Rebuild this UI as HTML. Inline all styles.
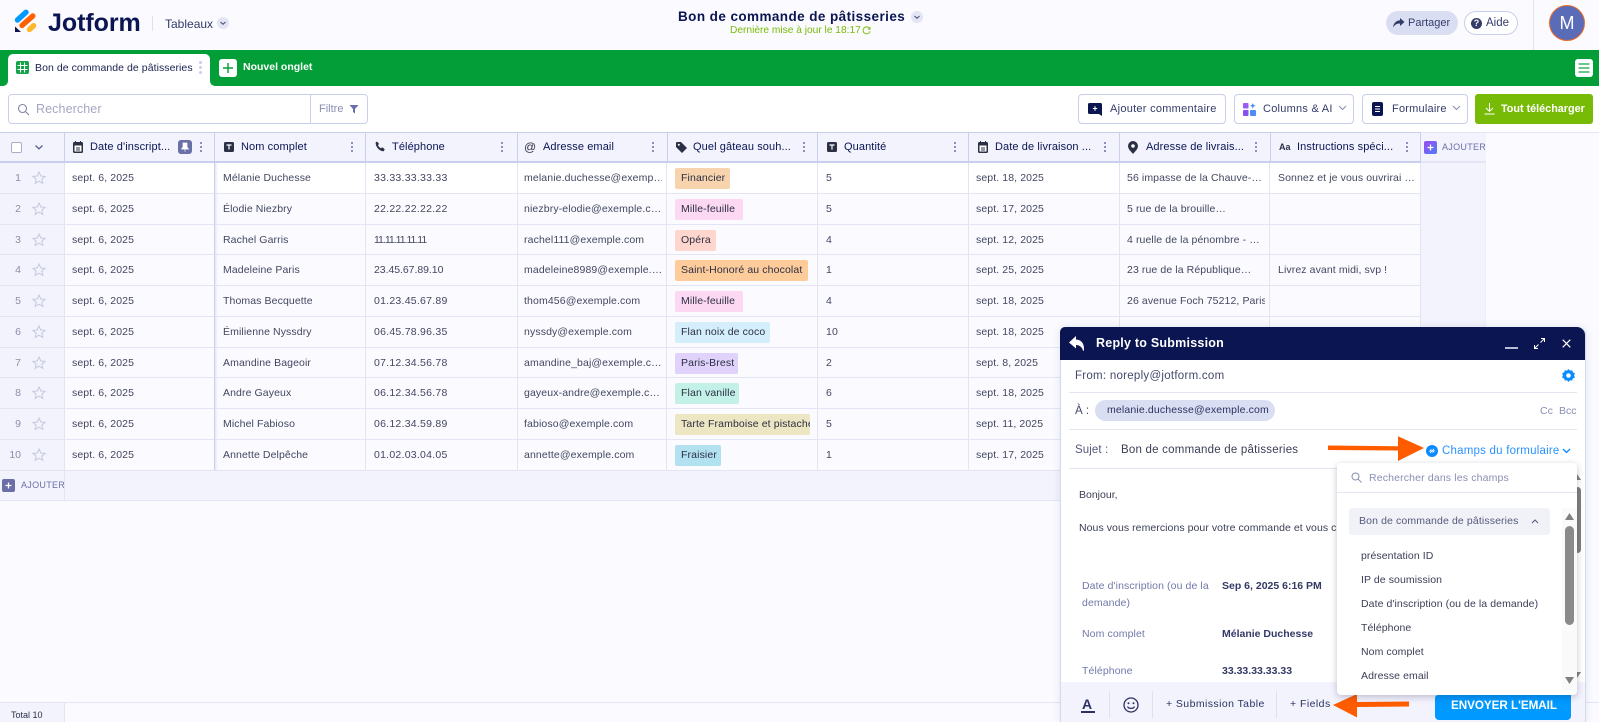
<!DOCTYPE html>
<html lang="fr"><head><meta charset="utf-8"><title>Jotform Tableaux</title>
<style>
*{box-sizing:border-box}
html,body{margin:0;padding:0;width:1599px;height:722px;overflow:hidden;background:#fafaff;font-family:"Liberation Sans",sans-serif;color:#3a3e55}
.a{position:absolute}
.t{position:absolute;white-space:nowrap}
svg{position:absolute;display:block}
.btn{position:absolute;top:94px;height:30px;background:#fff;border:1px solid #c8ceed;border-radius:4px}
.hd{position:absolute;top:132px;height:31px;background:#f3f3fe;border-top:1px solid #c8ceed;border-bottom:2px solid #c8ceed;border-right:1px solid #c8ceed}
.hl{position:absolute;top:138px;font-size:11px;line-height:18px;color:#0a1551;white-space:nowrap;letter-spacing:.1px}
.keb{position:absolute;top:142px;width:2px;height:2px;background:#6a6fa8;box-shadow:0 4px 0 #6a6fa8,0 8px 0 #6a6fa8;border-radius:1px}
.r{position:absolute;left:0;width:1421px;background:#fafaff;border-bottom:1px solid #e3e5f5}
.r.h31{height:31px}.r.h30{height:30px}
.n{position:absolute;left:0;top:0;bottom:0;width:65px;background:#f3f3fe;border-right:1px solid #e3e5f5;font-size:10.5px;color:#8a8fa8;line-height:31px}
.n b{font-weight:400;position:absolute;right:43px}
.c{position:absolute;top:0;font-size:10.5px;line-height:31px;color:#434760;white-space:nowrap;overflow:hidden;letter-spacing:.1px}
.tag{position:absolute;left:675px;top:5px;height:21px;border-radius:2px;font-size:10.5px;line-height:20px;padding-left:6px;color:#2b2f44;white-space:nowrap;overflow:hidden;letter-spacing:.12px}
.st{position:absolute;left:32px;top:8px}
.c1{left:72px;width:138px}.c2{left:223px;width:138px}.c3{left:374px;width:138px;letter-spacing:.25px}.c4{left:524px;width:138px;letter-spacing:.12px}.c6{left:826px;width:138px}.c7{left:976px;width:138px}.c8{left:1127px;width:138px}.c9{left:1278px;width:138px}
.it{position:absolute;left:1361px;font-size:10.5px;line-height:14px;color:#3a3e55;white-space:nowrap;letter-spacing:.08px}
.lab{position:absolute;left:1082px;font-size:10.5px;line-height:14px;color:#7278a8;white-space:nowrap;letter-spacing:.1px}
.val{position:absolute;left:1222px;font-size:10.5px;line-height:14px;color:#343a66;font-weight:700;white-space:nowrap}
</style></head><body>

<!-- Top bar -->
<svg style="left:12px;top:8px" width="28" height="26" viewBox="12 8 28 26">
<path d="M17.5 20 26 12.3" stroke="#0099ff" stroke-width="5.4" stroke-linecap="round"/>
<path d="M22 25.5 32.8 16" stroke="#ff6100" stroke-width="5.4" stroke-linecap="round"/>
<path d="M29.5 29.5 33.6 25.7" stroke="#ffb629" stroke-width="5.4" stroke-linecap="round"/>
<path d="M15 26.5V32h6z" fill="#0a1551"/></svg>
<div class="t" style="left:48px;top:8px;font-size:25px;line-height:30px;font-weight:700;color:#0a1551;letter-spacing:-.05px">Jotform</div>
<div class="a" style="left:152px;top:16px;width:1px;height:15px;background:#dfe1ef"></div>
<div class="t" style="left:165px;top:15px;font-size:12px;line-height:18px;color:#343c6a">Tableaux</div>
<div class="a" style="left:217px;top:17px;width:12px;height:12px;border-radius:50%;background:#e3e5f5"></div>
<svg style="left:217px;top:17px" width="12" height="12" viewBox="0 0 12 12"><path d="M3.5 5l2.5 2.3L8.500 5" fill="none" stroke="#4b5278" stroke-width="1.1"/></svg>

<div class="t" style="left:678px;top:8px;font-size:13.500px;line-height:18px;font-weight:700;color:#0a1551;letter-spacing:.42px">Bon de commande de pâtisseries</div>
<div class="a" style="left:911px;top:11px;width:12px;height:12px;border-radius:50%;background:#e3e5f5"></div>
<svg style="left:911px;top:11px" width="12" height="12" viewBox="0 0 12 12"><path d="M3.5 5l2.5 2.300L8.500 5" fill="none" stroke="#4b5278" stroke-width="1.1"/></svg>
<div class="t" style="left:730px;top:24px;font-size:10.2px;line-height:14px;color:#78bb07">Dernière mise à jour le 18:17</div>
<svg style="left:862px;top:26px" width="9" height="9" viewBox="0 0 9 9"><path d="M7.800 3A3.500 3.500 0 1 0 8 5.200M8 1v2.200H5.900" fill="none" stroke="#78bb07" stroke-width=".9"/></svg>

<div class="a" style="left:1386px;top:11px;width:72px;height:24px;border-radius:12px;background:#dadef3"></div>
<svg style="left:1392px;top:17px" width="13" height="12" viewBox="0 0 13 12"><path d="M8 1l4.500 4L8 9V6.500C5 6.500 2.800 7.500 1 10.500 1.500 6.500 4 3.500 8 3.300z" fill="#343c6a"/></svg>
<div class="t" style="left:1408px;top:15px;font-size:11px;line-height:16px;color:#343c6a">Partager</div>
<div class="a" style="left:1464px;top:11px;width:54px;height:24px;border-radius:12px;background:#fff;border:1px solid #c8ceed"></div>
<div class="a" style="left:1471px;top:18px;width:11px;height:11px;border-radius:50%;background:#343c6a;color:#fff;font-size:9px;line-height:11px;text-align:center;font-weight:700">?</div>
<div class="t" style="left:1486px;top:15px;font-size:11.500px;line-height:16px;color:#343c6a">Aide</div>
<div class="a" style="left:1533px;top:0;width:1px;height:50px;background:#e3e5f0"></div>
<div class="a" style="left:1549px;top:5px;width:36px;height:36px;border-radius:50%;background:#5a6cb8;border:1px solid #f06a20;color:#fff;font-size:18px;line-height:34px;text-align:center">M</div>

<!-- Green tab bar -->
<div class="a" style="left:0;top:50px;width:1599px;height:36px;background:#049e38"></div>
<div class="a" style="left:8px;top:54px;width:202px;height:32px;background:#fff;border-radius:5px 5px 0 0"></div>
<div class="a" style="left:0;top:80px;width:8px;height:6px;background:#fff"></div>
<div class="a" style="left:0;top:74px;width:8px;height:12px;background:#049e38;border-radius:0 0 5px 0"></div>
<div class="a" style="left:210px;top:80px;width:6px;height:6px;background:#fff"></div>
<div class="a" style="left:210px;top:74px;width:6px;height:12px;background:#049e38;border-radius:0 0 0 5px"></div>
<svg style="left:16px;top:61px" width="13" height="13" viewBox="0 0 13 13"><rect width="13" height="13" rx="2" fill="#16a34a"/><path d="M1.500 4.500h10M1.500 8.500h10M4.500 1.500v10M8.500 1.500v10" stroke="#fff" stroke-width="1"/></svg>
<div class="t" style="left:35px;top:60px;font-size:10.5px;line-height:16px;color:#1a2050;letter-spacing:.06px">Bon de commande de pâtisseries</div>
<div class="a" style="left:199px;top:61px;width:3px;height:3px;border-radius:50%;background:#c8ceed;box-shadow:0 5px 0 #c8ceed,0 10px 0 #c8ceed"></div>
<div class="a" style="left:219px;top:59px;width:18px;height:18px;background:#fff;border-radius:3px"></div>
<svg style="left:219px;top:59px" width="18" height="18" viewBox="0 0 18 18"><path d="M9 4v10M4 9h10" stroke="#049e38" stroke-width="1.400"/></svg>
<div class="t" style="left:243px;top:60px;font-size:10.500px;line-height:15px;color:#fff;font-weight:700">Nouvel onglet</div>
<div class="a" style="left:1575px;top:59px;width:18px;height:18px;background:#fff;border-radius:3px"></div>
<svg style="left:1575px;top:59px" width="18" height="18" viewBox="0 0 18 18"><path d="M3.500 5h11M3.500 9h11M3.500 13h11" stroke="#16a34a" stroke-width="1.300"/></svg>

<!-- Toolbar -->
<div class="a" style="left:0;top:86px;width:1599px;height:46px;background:#fff"></div>
<div class="btn" style="left:8px;width:360px"></div>
<div class="a" style="left:310px;top:95px;width:1px;height:28px;background:#c8ceed"></div>
<svg style="left:17px;top:103px" width="13" height="13" viewBox="0 0 13 13"><circle cx="5.500" cy="5.500" r="4" fill="none" stroke="#7d84a8" stroke-width="1.100"/><path d="M8.500 8.500L12 12" stroke="#7d84a8" stroke-width="1.100"/></svg>
<div class="t" style="left:36px;top:100px;font-size:12.5px;line-height:18px;color:#a2a7c4;letter-spacing:.1px">Rechercher</div>
<div class="t" style="left:319px;top:101px;font-size:11px;line-height:17px;color:#8a8fb4">Filtre</div>
<svg style="left:349px;top:104px" width="10" height="10" viewBox="0 0 10 10"><path d="M.5 1h9L6 5v4.500L4 8V5z" fill="#6a6fa8"/></svg>

<div class="btn" style="left:1078px;width:148px"></div>
<svg style="left:1088px;top:103px" width="14" height="13" viewBox="0 0 14 13"><path d="M1.500 0h11A1.500 1.500 0 0 1 14 1.500v9L14 13l-3-2H1.500A1.500 1.500 0 0 1 0 9.500v-8A1.500 1.500 0 0 1 1.500 0z" fill="#0a1551"/><path d="M7 3.300v4.400M4.800 5.500h4.400" stroke="#fff" stroke-width="1.100"/></svg>
<div class="t" style="left:1110px;top:101px;font-size:11px;line-height:16px;color:#343c6a;letter-spacing:.27px">Ajouter commentaire</div>
<div class="btn" style="left:1234px;width:120px"></div>
<svg style="left:1243px;top:103px" width="13" height="13" viewBox="0 0 13 13"><rect x="0" y="0" width="5.500" height="5.500" rx="1" fill="#9b5cf6"/><rect x="0" y="7" width="5.500" height="6" rx="1" fill="#8b4cf0"/><rect x="7" y="7" width="6" height="6" rx="1" fill="#4c8df6"/><path d="M9.800 0l.8 2 2 .8-2 .8-.8 2-.8-2-2-.8 2-.8z" fill="#3f8cf0"/></svg>
<div class="t" style="left:1263px;top:101px;font-size:11px;line-height:16px;color:#343c6a;letter-spacing:.25px">Columns &amp; AI</div>
<svg style="left:1338px;top:105px" width="9" height="6" viewBox="0 0 9 6"><path d="M1 1l3.500 3.500L8 1" fill="none" stroke="#8a8fb4" stroke-width="1.100"/></svg>
<div class="btn" style="left:1362px;width:106px"></div>
<div class="a" style="left:1372px;top:102px;width:11px;height:14px;background:#0a1551;border-radius:2px"></div>
<svg style="left:1372px;top:102px" width="11" height="14" viewBox="0 0 11 14"><path d="M3 4.500h5M3 7h5M3 9.500h5" stroke="#fff" stroke-width="1"/></svg>
<div class="t" style="left:1392px;top:101px;font-size:11px;line-height:16px;color:#343c6a;letter-spacing:.22px">Formulaire</div>
<svg style="left:1452px;top:105px" width="9" height="6" viewBox="0 0 9 6"><path d="M1 1l3.500 3.500L8 1" fill="none" stroke="#8a8fb4" stroke-width="1.100"/></svg>
<div class="a" style="left:1475px;top:94px;width:118px;height:30px;background:#78bb07;border-radius:3px"></div>
<svg style="left:1484px;top:103px" width="11" height="12" viewBox="0 0 11 12"><path d="M5.500 0v8M2 5l3.500 3.300L9 5M.5 11h10" fill="none" stroke="#fff" stroke-width="1"/></svg>
<div class="t" style="left:1501px;top:101px;font-size:10.8px;line-height:16px;color:#fff;font-weight:700">Tout télécharger</div>

<!-- Table header -->
<div class="a" style="left:0;top:132px;width:1599px;height:1px;background:#e3e5f5"></div>
<div class="hd" style="left:0;width:65px"></div>
<div class="hd" style="left:65px;width:150px"></div>
<div class="hd" style="left:215px;width:151px"></div>
<div class="hd" style="left:366px;width:152px"></div>
<div class="hd" style="left:518px;width:150px"></div>
<div class="hd" style="left:668px;width:150px"></div>
<div class="hd" style="left:818px;width:151px"></div>
<div class="hd" style="left:969px;width:151px"></div>
<div class="hd" style="left:1120px;width:151px"></div>
<div class="hd" style="left:1271px;width:150px"></div>
<div class="hd" style="left:1421px;width:65px;border-right:0;border-top-color:#e3e5f5;border-bottom-color:#e3e5f5"></div>

<div class="a" style="left:11px;top:142px;width:11px;height:11px;background:#fff;border:1px solid #a8adca;border-radius:2px"></div>
<svg style="left:34px;top:144px" width="10" height="7" viewBox="0 0 10 7"><path d="M1.500 1.500L5 4.800l3.500-3.300" fill="none" stroke="#5a6090" stroke-width="1.300"/></svg>

<svg style="left:73px;top:141px" width="10" height="12" viewBox="0 0 10 12"><rect y="1" width="10" height="11" rx="1.500" fill="#2c3045"/><path d="M2.500 0v2M7.500 0v2" stroke="#2c3045" stroke-width="1"/><rect x="1.500" y="4.500" width="7" height="6" fill="#fff"/><path d="M3 7h4M3 9h4" stroke="#2c3045" stroke-width="1"/></svg>
<div class="hl" style="left:90px">Date d'inscript...</div>
<div class="a" style="left:178px;top:140px;width:14px;height:14px;background:#6a6fa8;border-radius:3px"></div>
<svg style="left:178px;top:140px" width="14" height="14" viewBox="0 0 14 14"><path d="M5 3h4v4l1.500 2h-7L5 7zM7 9v2.500" fill="#fff" stroke="#fff" stroke-width=".7"/></svg>
<div class="keb" style="left:200px"></div>
<svg style="left:224px;top:142px" width="10" height="10" viewBox="0 0 10 10"><rect width="10" height="10" rx="1.500" fill="#2c3045"/><path d="M2.500 3h5M5 3v4.500" stroke="#fff" stroke-width="1.200"/></svg>
<div class="hl" style="left:241px">Nom complet</div>
<div class="keb" style="left:351px"></div>
<svg style="left:375px;top:141px" width="11" height="11" viewBox="0 0 11 11"><path d="M2 .5l2 2.300-1 1.500c.6 1.300 1.700 2.400 3 3l1.400-1 2.300 2-1 1.900C4.500 10.300.7 6.300.6 1.500z" fill="#2c3045"/></svg>
<div class="hl" style="left:392px">Téléphone</div>
<div class="keb" style="left:501px"></div>
<div class="t" style="left:524px;top:139px;font-size:12px;line-height:16px;color:#2c3045">@</div>
<div class="hl" style="left:543px">Adresse email</div>
<div class="keb" style="left:652px"></div>
<svg style="left:676px;top:142px" width="11" height="11" viewBox="0 0 11 11"><path d="M0 1v4l6 6 5-5-6-6H1a1 1 0 0 0-1 1z" fill="#2c3045"/><circle cx="2.800" cy="2.800" r="1" fill="#fff"/></svg>
<div class="hl" style="left:693px">Quel gâteau souh...</div>
<div class="keb" style="left:803px"></div>
<svg style="left:827px;top:142px" width="10" height="10" viewBox="0 0 10 10"><rect width="10" height="10" rx="1.500" fill="#2c3045"/><path d="M2.500 3h5M5 3v4.500" stroke="#fff" stroke-width="1.200"/></svg>
<div class="hl" style="left:844px">Quantité</div>
<div class="keb" style="left:954px"></div>
<svg style="left:978px;top:141px" width="10" height="12" viewBox="0 0 10 12"><rect y="1" width="10" height="11" rx="1.500" fill="#2c3045"/><path d="M2.500 0v2M7.500 0v2" stroke="#2c3045" stroke-width="1"/><rect x="1.500" y="4.500" width="7" height="6" fill="#fff"/><path d="M3 7h4M3 9h4" stroke="#2c3045" stroke-width="1"/></svg>
<div class="hl" style="left:995px">Date de livraison ...</div>
<div class="keb" style="left:1104px"></div>
<svg style="left:1128px;top:141px" width="10" height="13" viewBox="0 0 10 13"><path d="M5 0a5 5 0 0 1 5 5c0 3-3 5.500-5 8-2-2.500-5-5-5-8a5 5 0 0 1 5-5z" fill="#2c3045"/><circle cx="5" cy="5" r="1.800" fill="#fff"/></svg>
<div class="hl" style="left:1146px">Adresse de livrais...</div>
<div class="keb" style="left:1255px"></div>
<div class="t" style="left:1279px;top:141px;font-size:9px;line-height:13px;font-weight:700;color:#2c3045">Aa</div>
<div class="hl" style="left:1297px">Instructions spéci...</div>
<div class="keb" style="left:1406px"></div>
<div class="a" style="left:1424px;top:141px;width:13px;height:13px;border-radius:2px;background:linear-gradient(135deg,#9b4cf0,#4c7df6)"></div>
<svg style="left:1424px;top:141px" width="13" height="13" viewBox="0 0 13 13"><path d="M6.500 3.500v6M3.500 6.500h6" stroke="#fff" stroke-width="1.300"/></svg>
<div class="t" style="left:1442px;top:141px;font-size:9px;line-height:13px;color:#6a6fa8;letter-spacing:.3px">AJOUTER</div>

<!-- Rows -->
<div class="r h31" style="top:163px;background:#fff"><div class="n"><b>1</b><svg class="st" width="14" height="14" viewBox="0 0 14 14"><path d="M7 1l1.800 4 4.200.4-3.200 2.800 1 4.200L7 10.200 3.200 12.400l1-4.200L1 5.400 5.200 5z" fill="none" stroke="#c5c9de" stroke-width="1"/></svg></div><div class="c c1">sept. 6, 2025</div><div class="c c2">Mélanie Duchesse</div><div class="c c3">33.33.33.33.33</div><div class="c c4">melanie.duchesse@exemp…</div><div class="tag" style="width:55px;background:#f8d4ae">Financier</div><div class="c c6">5</div><div class="c c7">sept. 18, 2025</div><div class="c c8">56 impasse de la Chauve-…</div><div class="c c9">Sonnez et je vous ouvrirai …</div></div>
<div class="r h31" style="top:194px"><div class="n"><b>2</b><svg class="st" width="14" height="14" viewBox="0 0 14 14"><path d="M7 1l1.800 4 4.200.4-3.200 2.800 1 4.200L7 10.200 3.200 12.400l1-4.200L1 5.400 5.200 5z" fill="none" stroke="#c5c9de" stroke-width="1"/></svg></div><div class="c c1">sept. 6, 2025</div><div class="c c2">Élodie Niezbry</div><div class="c c3">22.22.22.22.22</div><div class="c c4">niezbry-elodie@exemple.c…</div><div class="tag" style="width:68px;background:#fcd8f2">Mille-feuille</div><div class="c c6">5</div><div class="c c7">sept. 17, 2025</div><div class="c c8">5 rue de la brouille…</div></div>
<div class="r h30" style="top:225px"><div class="n"><b>3</b><svg class="st" width="14" height="14" viewBox="0 0 14 14"><path d="M7 1l1.800 4 4.200.4-3.200 2.800 1 4.200L7 10.200 3.200 12.400l1-4.200L1 5.400 5.200 5z" fill="none" stroke="#c5c9de" stroke-width="1"/></svg></div><div class="c c1">sept. 6, 2025</div><div class="c c2">Rachel Garris</div><div class="c c3" style="letter-spacing:-1px">11.11.11.11.11</div><div class="c c4">rachel111@exemple.com</div><div class="tag" style="width:41px;background:#fed6cd">Opéra</div><div class="c c6">4</div><div class="c c7">sept. 12, 2025</div><div class="c c8">4 ruelle de la pénombre - …</div></div>
<div class="r h31" style="top:255px"><div class="n"><b>4</b><svg class="st" width="14" height="14" viewBox="0 0 14 14"><path d="M7 1l1.800 4 4.200.4-3.200 2.800 1 4.200L7 10.200 3.200 12.400l1-4.200L1 5.400 5.200 5z" fill="none" stroke="#c5c9de" stroke-width="1"/></svg></div><div class="c c1">sept. 6, 2025</div><div class="c c2">Madeleine Paris</div><div class="c c3" style="letter-spacing:-.05px">23.45.67.89.10</div><div class="c c4">madeleine8989@exemple.…</div><div class="tag" style="width:133px;background:#fecc9a">Saint-Honoré au chocolat</div><div class="c c6">1</div><div class="c c7">sept. 25, 2025</div><div class="c c8">23 rue de la République…</div><div class="c c9">Livrez avant midi, svp !</div></div>
<div class="r h31" style="top:286px"><div class="n"><b>5</b><svg class="st" width="14" height="14" viewBox="0 0 14 14"><path d="M7 1l1.800 4 4.200.4-3.200 2.800 1 4.200L7 10.200 3.200 12.400l1-4.200L1 5.400 5.200 5z" fill="none" stroke="#c5c9de" stroke-width="1"/></svg></div><div class="c c1">sept. 6, 2025</div><div class="c c2">Thomas Becquette</div><div class="c c3">01.23.45.67.89</div><div class="c c4">thom456@exemple.com</div><div class="tag" style="width:68px;background:#fcd8f2">Mille-feuille</div><div class="c c6">4</div><div class="c c7">sept. 18, 2025</div><div class="c c8">26 avenue Foch 75212, Paris</div></div>
<div class="r h31" style="top:317px"><div class="n"><b>6</b><svg class="st" width="14" height="14" viewBox="0 0 14 14"><path d="M7 1l1.800 4 4.200.4-3.200 2.800 1 4.200L7 10.200 3.200 12.400l1-4.200L1 5.400 5.200 5z" fill="none" stroke="#c5c9de" stroke-width="1"/></svg></div><div class="c c1">sept. 6, 2025</div><div class="c c2">Émilienne Nyssdry</div><div class="c c3">06.45.78.96.35</div><div class="c c4">nyssdy@exemple.com</div><div class="tag" style="width:95px;background:#d4eefc">Flan noix de coco</div><div class="c c6">10</div><div class="c c7">sept. 18, 2025</div></div>
<div class="r h30" style="top:348px"><div class="n"><b>7</b><svg class="st" width="14" height="14" viewBox="0 0 14 14"><path d="M7 1l1.800 4 4.200.4-3.200 2.800 1 4.200L7 10.200 3.200 12.400l1-4.200L1 5.400 5.200 5z" fill="none" stroke="#c5c9de" stroke-width="1"/></svg></div><div class="c c1">sept. 6, 2025</div><div class="c c2">Amandine Bageoir</div><div class="c c3">07.12.34.56.78</div><div class="c c4">amandine_baj@exemple.c…</div><div class="tag" style="width:63px;background:#e0d2fb">Paris-Brest</div><div class="c c6">2</div><div class="c c7">sept. 8, 2025</div></div>
<div class="r h31" style="top:378px"><div class="n"><b>8</b><svg class="st" width="14" height="14" viewBox="0 0 14 14"><path d="M7 1l1.800 4 4.200.4-3.200 2.800 1 4.200L7 10.200 3.200 12.400l1-4.200L1 5.400 5.200 5z" fill="none" stroke="#c5c9de" stroke-width="1"/></svg></div><div class="c c1">sept. 6, 2025</div><div class="c c2">Andre Gayeux</div><div class="c c3">06.12.34.56.78</div><div class="c c4">gayeux-andre@exemple.c…</div><div class="tag" style="width:64px;background:#c3f1e7">Flan vanille</div><div class="c c6">6</div><div class="c c7">sept. 18, 2025</div></div>
<div class="r h31" style="top:409px"><div class="n"><b>9</b><svg class="st" width="14" height="14" viewBox="0 0 14 14"><path d="M7 1l1.800 4 4.200.4-3.200 2.800 1 4.200L7 10.200 3.200 12.400l1-4.200L1 5.400 5.200 5z" fill="none" stroke="#c5c9de" stroke-width="1"/></svg></div><div class="c c1">sept. 6, 2025</div><div class="c c2">Michel Fabioso</div><div class="c c3">06.12.34.59.89</div><div class="c c4">fabioso@exemple.com</div><div class="tag" style="width:135px;background:#ede6c2">Tarte Framboise et pistache</div><div class="c c6">5</div><div class="c c7">sept. 11, 2025</div></div>
<div class="r h31" style="top:440px"><div class="n"><b>10</b><svg class="st" width="14" height="14" viewBox="0 0 14 14"><path d="M7 1l1.800 4 4.200.4-3.200 2.800 1 4.200L7 10.200 3.200 12.400l1-4.200L1 5.400 5.200 5z" fill="none" stroke="#c5c9de" stroke-width="1"/></svg></div><div class="c c1">sept. 6, 2025</div><div class="c c2">Annette Delpêche</div><div class="c c3">01.02.03.04.05</div><div class="c c4">annette@exemple.com</div><div class="tag" style="width:46px;background:#b2e2f0">Fraisier</div><div class="c c6">1</div><div class="c c7">sept. 17, 2025</div></div>

<!-- Vertical lines -->
<div class="a" style="left:214px;top:163px;width:1px;height:307px;background:#c8ceed"></div>
<div class="a" style="left:215px;top:163px;width:3px;height:307px;background:linear-gradient(90deg,#e6e7f4,rgba(250,250,255,0))"></div>
<div class="a" style="left:365px;top:163px;width:1px;height:308px;background:#e3e5f5"></div>
<div class="a" style="left:517px;top:163px;width:1px;height:308px;background:#e3e5f5"></div>
<div class="a" style="left:666px;top:163px;width:1px;height:308px;background:#e3e5f5"></div>
<div class="a" style="left:817px;top:163px;width:1px;height:308px;background:#e3e5f5"></div>
<div class="a" style="left:968px;top:163px;width:1px;height:308px;background:#e3e5f5"></div>
<div class="a" style="left:1119px;top:163px;width:1px;height:308px;background:#e3e5f5"></div>
<div class="a" style="left:1269px;top:163px;width:1px;height:308px;background:#e3e5f5"></div>
<div class="a" style="left:1420px;top:163px;width:1px;height:308px;background:#e3e5f5"></div>
<div class="a" style="left:1421px;top:163px;width:65px;height:308px;background:#f3f3fe;border-right:1px solid #eceefa"></div>

<!-- Add row -->
<div class="a" style="left:0;top:471px;width:1486px;height:30px;background:#f3f3fe;border-bottom:1px solid #e3e5f5"></div>
<div class="a" style="left:64px;top:471px;width:1px;height:29px;background:#e3e5f5"></div>
<div class="a" style="left:2px;top:479px;width:13px;height:13px;background:#6a6fa8;border-radius:2px"></div>
<svg style="left:2px;top:479px" width="13" height="13" viewBox="0 0 13 13"><path d="M6.500 3.500v6M3.500 6.500h6" stroke="#fff" stroke-width="1.300"/></svg>
<div class="t" style="left:21px;top:479px;font-size:9px;line-height:13px;color:#6a6fa8;letter-spacing:.3px">AJOUTER</div>

<!-- Footer -->
<div class="a" style="left:0;top:702px;width:1599px;height:20px;background:#fafaff;border-top:1px solid #e3e5f5"></div>
<div class="a" style="left:0;top:703px;width:65px;height:19px;background:#f3f3fe;border-right:1px solid #e3e5f5"></div>
<div class="t" style="left:11px;top:709px;font-size:9px;line-height:12px;color:#2c3045">Total 10</div>

<!-- Reply panel -->
<div class="a" style="left:1060px;top:327px;width:526px;height:395px;background:#fff;border-radius:5px 8px 0 0;border-left:1px solid #d5d8ee;border-right:1px solid #d5d8ee;box-shadow:0 0 8px rgba(60,60,120,.12)"></div>
<div class="a" style="left:1060px;top:327px;width:525px;height:33px;background:#0a1551;border-radius:5px 8px 0 0"></div>
<svg style="left:1069px;top:336px" width="16" height="15" viewBox="0 0 16 15"><path d="M7 0v3.500c5 .3 8 3.500 8 9.500 0 1-.3 2-1 2-.3-3-3-6-7-6v3.500L0 6.500z" fill="#fff"/></svg>
<div class="t" style="left:1096px;top:334px;font-size:12.500px;line-height:18px;font-weight:700;color:#fff;letter-spacing:.23px">Reply to Submission</div>
<div class="a" style="left:1505px;top:347px;width:13px;height:2px;background:#b8bcd4"></div>
<svg style="left:1534px;top:338px" width="11" height="11" viewBox="0 0 11 11"><path d="M6.500 4.500L10.500.5M7 .5h3.500V4M4.500 6.500L.5 10.500M.5 7v3.500H4" fill="none" stroke="#fff" stroke-width="1"/></svg>
<svg style="left:1562px;top:339px" width="9" height="9" viewBox="0 0 9 9"><path d="M.7.700l7.600 7.600M8.300.7L.7 8.300" stroke="#fff" stroke-width="1.200"/></svg>

<div class="t" style="left:1075px;top:367px;font-size:11.500px;line-height:18px;color:#44486a;letter-spacing:.27px">From: noreply@jotform.com</div>
<svg style="left:1562px;top:369px" width="13" height="13" viewBox="0 0 13 13"><path d="M6.500 0l1.500 1.600 2.200-.4.600 2.100 2.100.9-.8 2.200.8 2.200-2.100.9-.6 2.100-2.200-.4L6.500 13l-1.500-1.800-2.200.4-.6-2.100L.1 8.600.9 6.400.1 4.200l2.100-.9.600-2.100 2.200.4z" fill="#0a8bff"/><circle cx="6.500" cy="6.500" r="2.300" fill="#fff"/></svg>
<div class="a" style="left:1069px;top:392px;width:508px;height:1px;background:#e4e5ee"></div>
<div class="t" style="left:1075px;top:402px;font-size:11.500px;line-height:18px;color:#44486a">À :</div>
<div class="a" style="left:1095px;top:400px;width:180px;height:21px;border-radius:11px;background:#dadef3"></div>
<div class="t" style="left:1107px;top:403px;font-size:10.500px;line-height:15px;color:#2c3260;letter-spacing:.15px">melanie.duchesse@exemple.com</div>
<div class="t" style="left:1540px;top:404px;font-size:10.500px;line-height:14px;color:#8a8fb4">Cc</div>
<div class="t" style="left:1559px;top:404px;font-size:10.500px;line-height:14px;color:#8a8fb4">Bcc</div>
<div class="a" style="left:1069px;top:429px;width:508px;height:1px;background:#e4e5ee"></div>
<div class="t" style="left:1075px;top:441px;font-size:11.500px;line-height:18px;color:#55597a;letter-spacing:.1px">Sujet :</div>
<div class="t" style="left:1121px;top:441px;font-size:11.500px;line-height:18px;color:#3a3e55;letter-spacing:.22px">Bon de commande de pâtisseries</div>
<svg style="left:1328px;top:434px" width="100" height="30" viewBox="1328 434 100 30"><path d="M1328 445.500l70 .7v-10l26 11.800-26 13v-10.500l-70-.5z" fill="#ff5c00"/></svg>
<div class="a" style="left:1426px;top:445px;width:12px;height:12px;border-radius:50%;background:#0a8bff"></div>
<svg style="left:1426px;top:445px" width="12" height="12" viewBox="0 0 12 12"><path d="M4 8l4-4M3.500 6.500L5.500 4.500M6.500 7.500l2-2" stroke="#fff" stroke-width="1"/></svg>
<div class="t" style="left:1442px;top:442px;font-size:11.500px;line-height:18px;color:#2a92ff;letter-spacing:.22px">Champs du formulaire</div>
<svg style="left:1562px;top:448px" width="9" height="6" viewBox="0 0 9 6"><path d="M1 1l3.500 3.500L8 1" fill="none" stroke="#0a8bff" stroke-width="1.300"/></svg>
<div class="a" style="left:1069px;top:468px;width:508px;height:1px;background:#e4e5ee"></div>

<div class="t" style="left:1079px;top:488px;font-size:10.500px;line-height:15px;color:#3a3e55">Bonjour,</div>
<div class="t" style="left:1079px;top:521px;font-size:10.500px;line-height:15px;color:#3a3e55;letter-spacing:.06px">Nous vous remercions pour votre commande et vous co</div>
<div class="lab" style="top:579px">Date d'inscription (ou de la</div>
<div class="lab" style="top:596px">demande)</div>
<div class="val" style="top:579px">Sep 6, 2025 6:16 PM</div>
<div class="lab" style="top:627px">Nom complet</div>
<div class="val" style="top:627px">Mélanie Duchesse</div>
<div class="lab" style="top:664px">Téléphone</div>
<div class="val" style="top:664px">33.33.33.33.33</div>

<!-- Outer scrollbar (behind dropdown) -->
<div class="a" style="left:1574px;top:487px;width:7px;height:66px;background:#808080;border-radius:4px"></div>
<svg style="left:1572px;top:473px" width="10" height="8" viewBox="0 0 10 8"><path d="M5 1l4 6H1z" fill="#808080"/></svg>
<svg style="left:1572px;top:671px" width="10" height="8" viewBox="0 0 10 8"><path d="M5 7L1 1h8z" fill="#808080"/></svg>

<!-- Bottom bar -->
<div class="a" style="left:1061px;top:682px;width:524px;height:40px;background:#f3f3fe"></div>
<div class="t" style="left:1082px;top:696px;font-size:14px;line-height:16px;font-weight:700;color:#2c3260">A</div>
<div class="a" style="left:1081px;top:711px;width:14px;height:2px;background:#2c3260"></div>
<div class="a" style="left:1109px;top:691px;width:1px;height:27px;background:#dfe1ef"></div>
<svg style="left:1123px;top:697px" width="16" height="16" viewBox="0 0 16 16"><circle cx="8" cy="8" r="7" fill="none" stroke="#2c3260" stroke-width="1.300"/><circle cx="5.500" cy="6.300" r="1" fill="#2c3260"/><circle cx="10.500" cy="6.300" r="1" fill="#2c3260"/><path d="M4.500 9.500c1 2.500 6 2.500 7 0" fill="none" stroke="#2c3260" stroke-width="1.200"/></svg>
<div class="a" style="left:1152px;top:691px;width:1px;height:27px;background:#dfe1ef"></div>
<div class="t" style="left:1166px;top:697px;font-size:10.500px;line-height:15px;color:#2c3260;letter-spacing:.42px">+ Submission Table</div>
<div class="a" style="left:1276px;top:691px;width:1px;height:27px;background:#dfe1ef"></div>
<div class="t" style="left:1290px;top:697px;font-size:10.500px;line-height:15px;color:#2c3260;letter-spacing:.45px">+ Fields</div>
<svg style="left:1332px;top:692px" width="80" height="28" viewBox="1332 692 80 28"><path d="M1333 705l24-11v8l52-.5v5l-52 .5v10.500z" fill="#ff5c00"/></svg>
<div class="a" style="left:1435px;top:695px;width:136px;height:25px;background:#0099ff;border-radius:3px 0 4px 4px"></div>
<div class="t" style="left:1451px;top:697px;font-size:11.7px;line-height:17px;font-weight:700;color:#fff;letter-spacing:-.05px">ENVOYER L'EMAIL</div>

<!-- Dropdown -->
<div class="a" style="left:1337px;top:463px;width:240px;height:232px;background:#fff;border-radius:4px;box-shadow:0 2px 7px rgba(40,40,80,.28)"></div>
<svg style="left:1351px;top:472px" width="11" height="11" viewBox="0 0 11 11"><circle cx="4.500" cy="4.500" r="3.500" fill="none" stroke="#8a8fb4" stroke-width="1"/><path d="M7 7l3.500 3.500" stroke="#8a8fb4" stroke-width="1"/></svg>
<div class="t" style="left:1369px;top:471px;font-size:10.500px;line-height:15px;color:#8a8fb4;letter-spacing:.15px">Rechercher dans les champs</div>
<div class="a" style="left:1337px;top:492px;width:240px;height:1px;background:#e3e5f5"></div>
<div class="a" style="left:1349px;top:508px;width:201px;height:27px;background:#f1f2f8;border-radius:3px"></div>
<div class="t" style="left:1359px;top:514px;font-size:10.500px;line-height:15px;color:#55597a;letter-spacing:.12px">Bon de commande de pâtisseries</div>
<svg style="left:1531px;top:519px" width="8" height="5" viewBox="0 0 8 5"><path d="M1 4l3-3 3 3" fill="none" stroke="#55597a" stroke-width="1"/></svg>
<div class="it" style="top:549px">présentation ID</div>
<div class="it" style="top:573px">IP de soumission</div>
<div class="it" style="top:597px">Date d'inscription (ou de la demande)</div>
<div class="it" style="top:621px">Téléphone</div>
<div class="it" style="top:645px">Nom complet</div>
<div class="it" style="top:669px">Adresse email</div>
<div class="a" style="left:1562px;top:508px;width:15px;height:182px;background:#fafafa"></div>
<div class="a" style="left:1565px;top:526px;width:9px;height:99px;background:#8a8a8a;border-radius:5px"></div>
<svg style="left:1565px;top:513px" width="9" height="7" viewBox="0 0 9 7"><path d="M4.500 0L9 7H0z" fill="#808080"/></svg>
<svg style="left:1565px;top:677px" width="9" height="7" viewBox="0 0 9 7"><path d="M4.500 7L0 0h9z" fill="#808080"/></svg>
</body></html>
